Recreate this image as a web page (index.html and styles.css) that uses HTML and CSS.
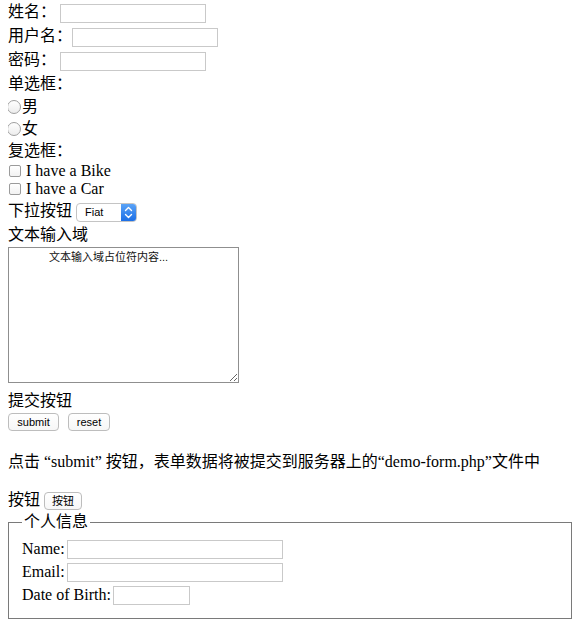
FILE: index.html
```html
<!DOCTYPE html>
<html lang="zh">
<head>
<meta charset="utf-8">
<title>表单</title>
<link rel="stylesheet" href="styles.css">
</head>
<body>
<form class="form" action="demo-form.php">
  <div class="row h24"><label>姓名：</label><input class="field w146 ml4" type="text"></div>
  <div class="row h24"><label>用户名：</label><input class="field w146" type="text"></div>
  <div class="row h24"><label>密码：</label><input class="field w146 ml4" type="password"></div>
  <div class="row h24">单选框：</div>
  <div class="row h22"><input class="radio" type="radio" name="sex">男</div>
  <div class="row h22"><input class="radio" type="radio" name="sex">女</div>
  <div class="row h22">复选框：</div>
  <div class="row h18"><input class="check" type="checkbox">I have a Bike</div>
  <div class="row h18"><input class="check" type="checkbox">I have a Car</div>
  <div class="row h26">下拉按钮<span class="select"><span class="select-value">Fiat</span><span class="select-arrow"><svg width="9" height="13" viewBox="0 0 9 13"><path d="M1.5 4.5 L4.5 1.5 L7.5 4.5 M1.5 8.5 L4.5 11.5 L7.5 8.5" fill="none" stroke="#fff" stroke-width="1.4" stroke-linecap="round" stroke-linejoin="round"/></svg></span></span></div>
  <div class="row h22">文本输入域</div>
  <textarea class="area" placeholder="文本输入域占位符内容..."></textarea>
  <div class="row h22 mt7">提交按钮</div>
  <div class="row h22 top">
    <button class="btn w51" type="submit">submit</button>
    <button class="btn w42 ml9" type="reset">reset</button>
  </div>
  <p class="note">点击 “submit” 按钮，表单数据将被提交到服务器上的“demo-form.php”文件中</p>
  <div class="row h22">按钮<button class="btn w38 ml4" type="button">按钮</button></div>
  <fieldset class="group">
    <legend class="legend">个人信息</legend>
    <div class="row h23">Name:<input class="field w216 ml2" type="text"></div>
    <div class="row h23">Email:<input class="field w216 ml2" type="text"></div>
    <div class="row h23">Date of Birth:<input class="field w77 ml2" type="text"></div>
  </fieldset>
</form>
</body>
</html>
```

FILE: styles.css
```css
html, body {
  background: #fff;
}
body {
  margin: 0 6px 0 8px;
  font-family: "Liberation Serif", "Noto Sans CJK SC", serif;
  font-size: 16px;
  line-height: 18px;
  color: #000;
}
.form {
  display: flex;
  flex-direction: column;
}
.row {
  display: flex;
  align-items: center;
  white-space: nowrap;
}
.top { align-items: flex-start; }
.h18 { height: 18px; }
.h22 { height: 22px; }
.h23 { height: 23px; }
.h24 { height: 24px; }
.h26 { height: 26px; }
.mt7 { margin-top: 7px; }
.ml2 { margin-left: 2px; }
.ml4 { margin-left: 4px; }
.ml9 { margin-left: 9px; }
.w38 { width: 38px; }
.w42 { width: 42px; }
.w51 { width: 51px; }
.w77 { width: 77px; }
.w146 { width: 146px; }
.w216 { width: 216px; }

.field {
  box-sizing: border-box;
  height: 19px;
  margin-top: 2px;
  margin-right: 0;
  margin-bottom: 0;
  padding: 0 2px;
  border: 1px solid #c9c9c9;
  border-radius: 0;
  background: #fff;
  font: 13px "Liberation Sans", sans-serif;
  outline: none;
}
.radio {
  -webkit-appearance: none;
  appearance: none;
  box-sizing: border-box;
  width: 14px;
  height: 14px;
  margin: 0 1px 0 -1px;
  border: 1px solid #a0a0a0;
  border-radius: 50%;
  background: linear-gradient(#fff, #ededed);
}
.check {
  -webkit-appearance: none;
  appearance: none;
  box-sizing: border-box;
  width: 12px;
  height: 12px;
  margin: 0 5px 0 1px;
  border: 1px solid #9b9b9b;
  border-radius: 2px;
  background: linear-gradient(#fff, #f2f2f2);
}
.select {
  display: flex;
  box-sizing: border-box;
  width: 61px;
  height: 19px;
  margin-left: 4px;
  margin-top: 2px;
  border: 1px solid #c4c4c4;
  border-radius: 4px;
  background: #fff;
  overflow: hidden;
}
.select-value {
  flex: 1;
  padding-left: 8px;
  font: 11px/17px "Liberation Sans", sans-serif;
  color: #000;
}
.select-arrow {
  display: flex;
  align-items: center;
  justify-content: center;
  width: 15px;
  background: linear-gradient(#5aa3f7, #1c6fe6);
}
.area {
  display: block;
  box-sizing: border-box;
  width: 231px;
  height: 136px;
  margin: 1px 0 0 0;
  padding: 2px 2px 2px 40px;
  border: 1px solid #8f8f8f;
  border-radius: 0;
  font: 11px/14px "Liberation Sans", "Noto Sans CJK SC", sans-serif;
  resize: both;
  outline: none;
}
.area::placeholder {
  color: #111;
  opacity: 1;
}
.btn {
  box-sizing: border-box;
  height: 18px;
  margin-top: 1px;
  padding: 0;
  border: 1px solid #bdbdbd;
  border-radius: 4px;
  background: linear-gradient(#fff, #f7f7f7);
  font: 11px/16px "Liberation Sans", "Noto Sans CJK SC", sans-serif;
  color: #000;
  text-align: center;
}
.note {
  margin: 18px 0 17px;
  line-height: 20px;
  white-space: nowrap;
}
.group {
  margin: 1px 0 0 0;
  padding: 5px 13px 12px;
  border: 1px solid #7a7a7a;
  min-width: 0;
}
.legend {
  padding: 0 2px;
  line-height: 20px;
  margin-top: 1px;
}
```
